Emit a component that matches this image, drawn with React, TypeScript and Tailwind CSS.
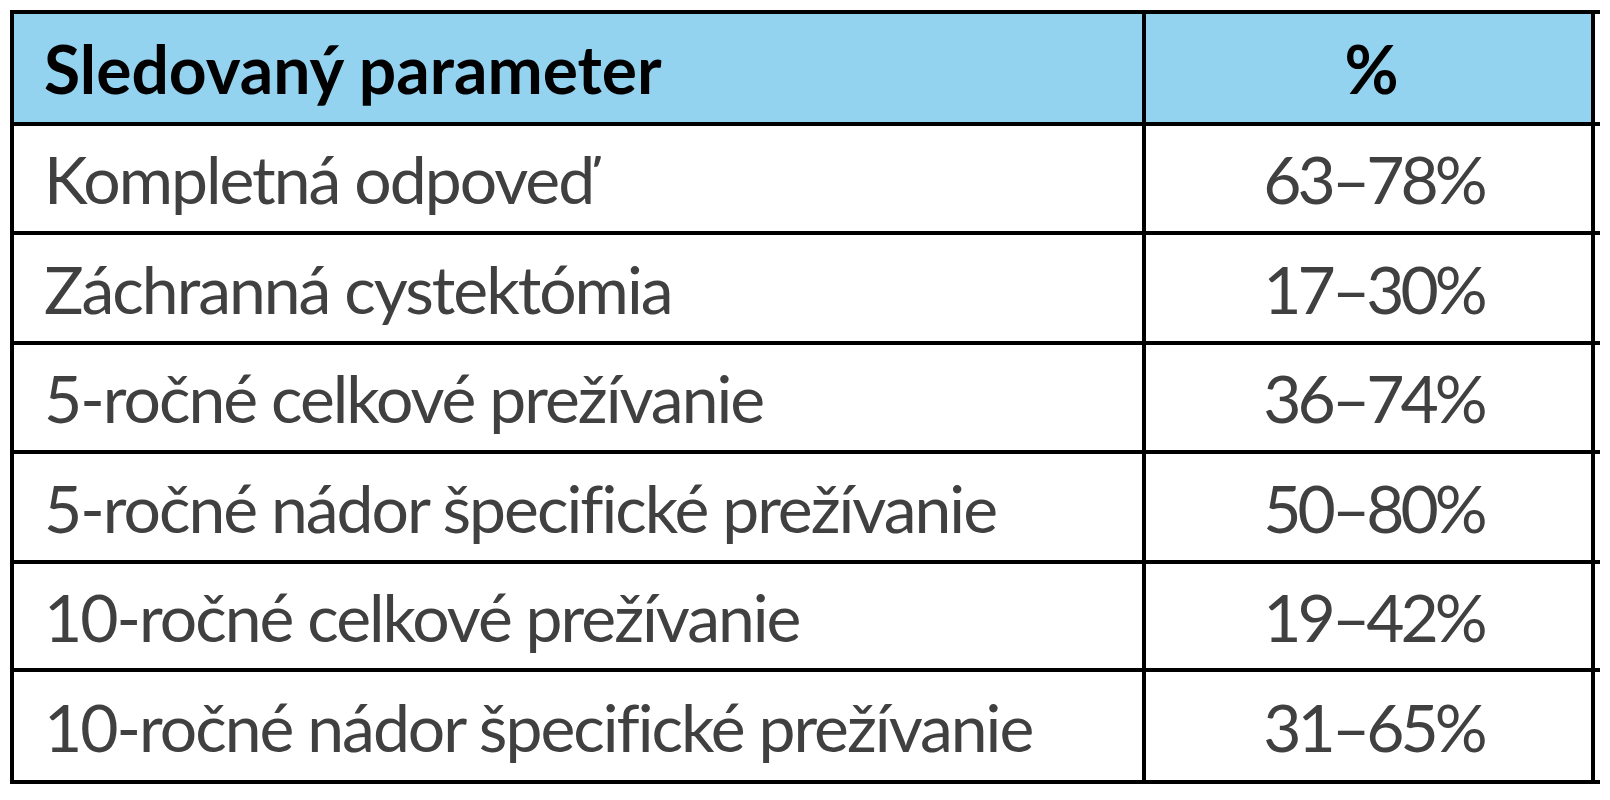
import React from "react";

const rows: { label: string; value: string; h: string }[] = [
  { label: "Kompletná odpoveď", value: "63–78%", h: "h-[109px]" },
  { label: "Záchranná cystektómia", value: "17–30%", h: "h-[110px]" },
  { label: "5-ročné celkové prežívanie", value: "36–74%", h: "h-[109px]" },
  { label: "5-ročné nádor špecifické prežívanie", value: "50–80%", h: "h-[110px]" },
  { label: "10-ročné celkové prežívanie", value: "19–42%", h: "h-[108px]" },
  { label: "10-ročné nádor špecifické prežívanie", value: "31–65%", h: "h-[112px]" },
];

export default function App() {
  return (
    <div className="w-[1610px] h-[800px] bg-white pt-[10px] pl-[10px]" style={{ fontFamily: 'Lato, "Open Sans", sans-serif' }}>
      <div className="w-[1590px] border-t-4 border-black">
        <div className="flex border-b-4 border-black h-[112px]">
          <div className="w-[1136px] border-l-4 border-r-4 border-black bg-[#93d3ef] flex items-center pl-[30px] text-[66px] font-bold text-black">
            Sledovaný parameter
          </div>
          <div className="w-[449px] border-r-4 border-black bg-[#93d3ef] flex items-center justify-center pl-[6px] text-[66px] font-bold text-black">
            %
          </div>
          <div className="w-[5px]" />
        </div>
        {rows.map((r) => (
          <div key={r.label} className={`flex border-b-4 border-black ${r.h}`}>
            <div className="w-[1136px] border-l-4 border-r-4 border-black flex items-center pl-[30px] text-[66px] text-[#404040] tracking-[-2px]">
              {r.label}
            </div>
            <div className="w-[449px] border-r-4 border-black flex items-center justify-center pl-[10px] text-[66px] text-[#404040] tracking-[-4px]">
              {r.value}
            </div>
            <div className="w-[5px]" />
          </div>
        ))}
      </div>
    </div>
  );
}
